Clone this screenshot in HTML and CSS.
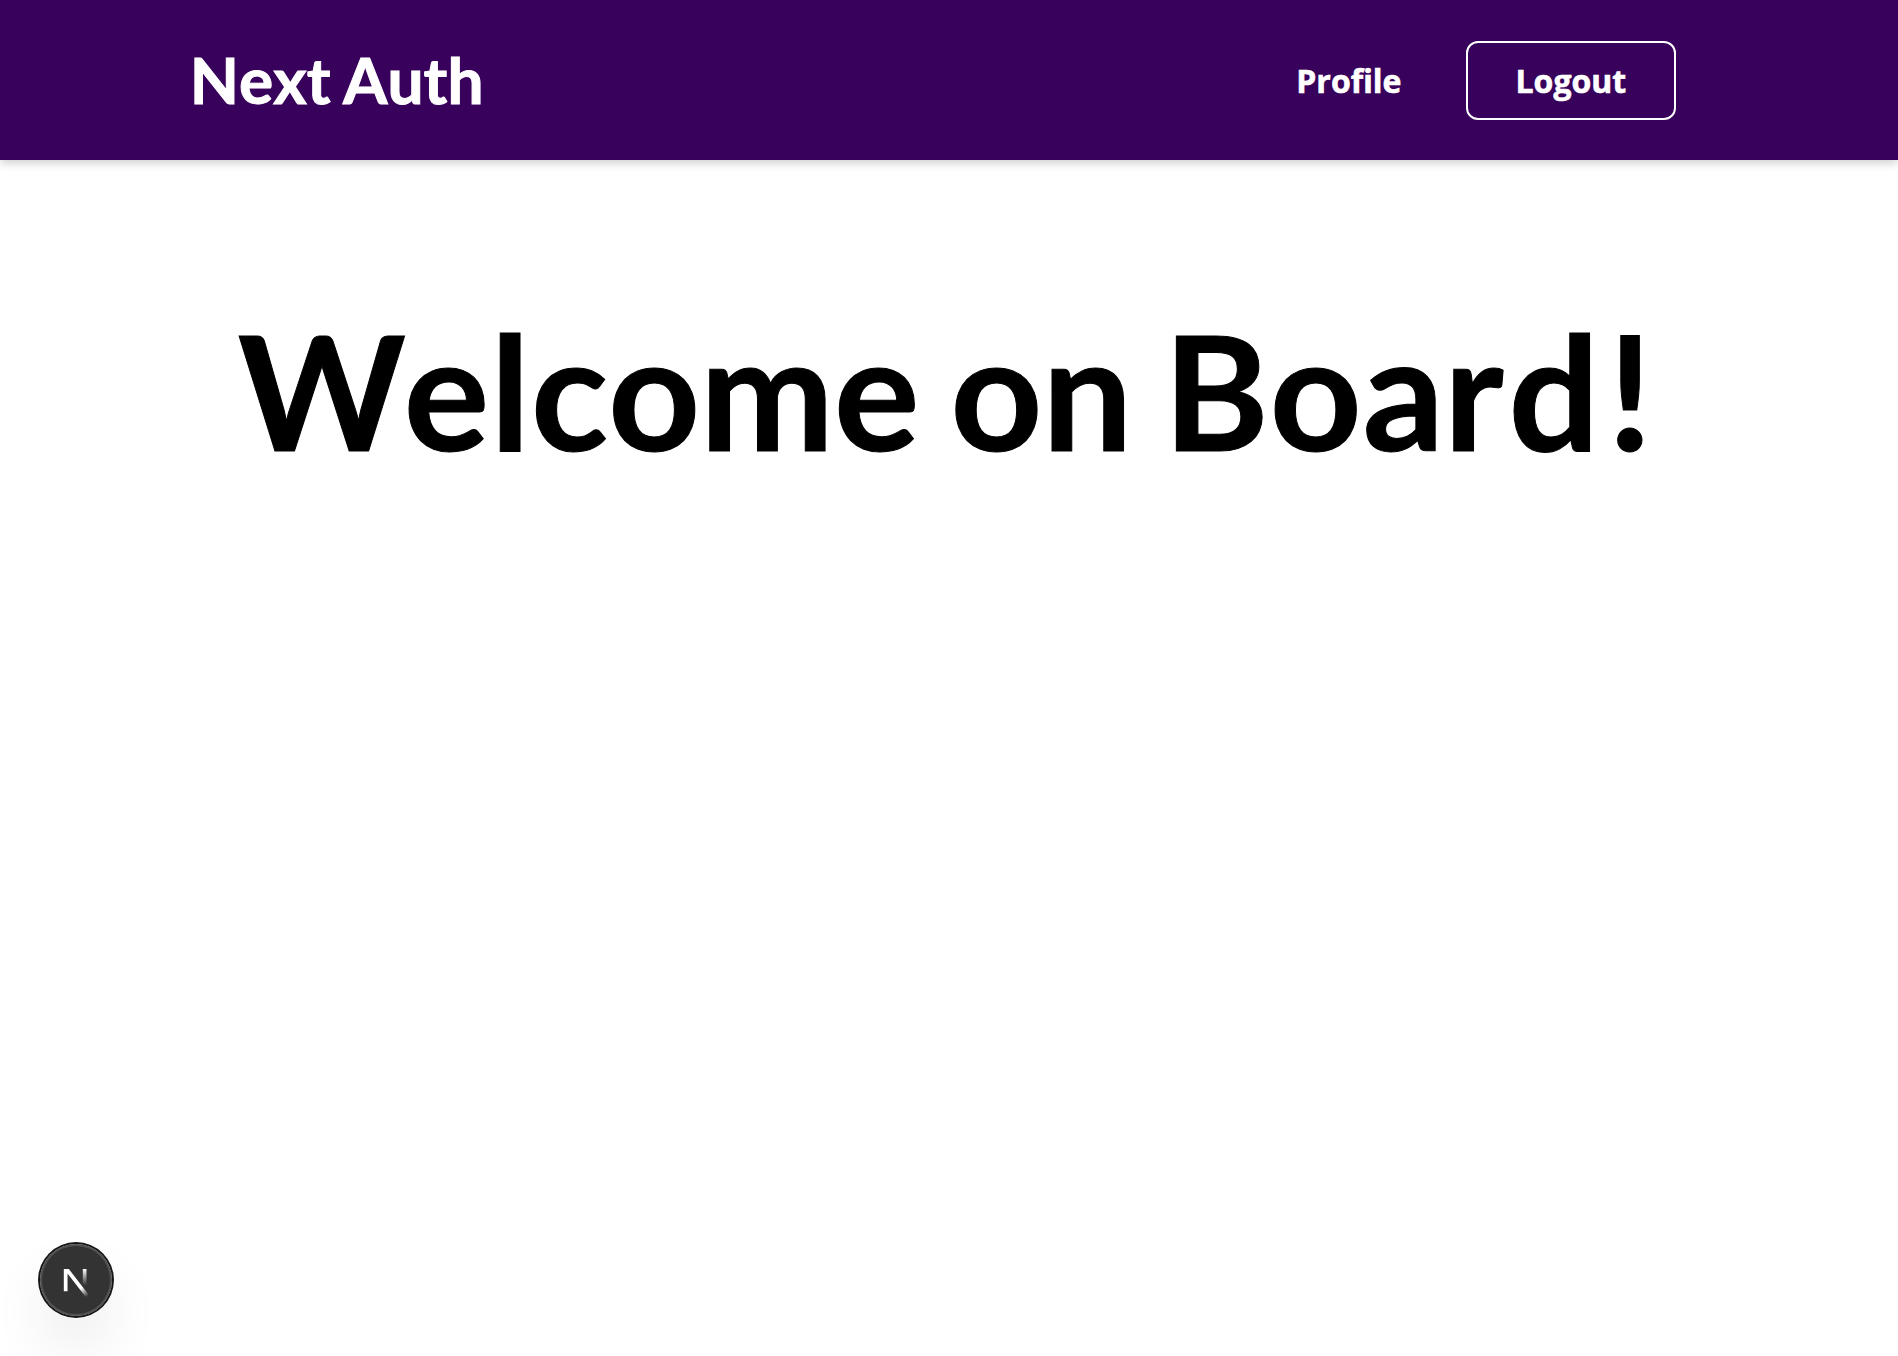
FILE: index.html
```html
<!DOCTYPE html>
<html lang="en">
<head>
<meta charset="utf-8">
<title>Next Auth</title>
<link rel="stylesheet" href="styles.css">
</head>
<body>
<header class="header">
  <a class="logo">Next Auth</a>
  <nav class="nav">
    <a class="nav-link">Profile</a>
    <button class="logout">Logout</button>
  </nav>
</header>
<main class="main">
  <h1 class="title"><span class="tight">W</span><span class="loose">el</span>come on <span class="loose">Bo</span>a<span class="wide">r</span><span class="wider">d!</span></h1>
</main>
<div class="badge">
  <svg width="72" height="72" viewBox="0 0 36 36" fill="none">
    <defs>
      <linearGradient id="diagonal" x1="9.95555" y1="11.1226" x2="15.4778" y2="17.9671" gradientUnits="userSpaceOnUse">
        <stop stop-color="white"/>
        <stop offset="0.604072" stop-color="white" stop-opacity="0"/>
        <stop offset="1" stop-color="white" stop-opacity="0"/>
      </linearGradient>
      <linearGradient id="stem" x1="11.8222" y1="1.40039" x2="11.791" y2="9.62542" gradientUnits="userSpaceOnUse">
        <stop stop-color="white"/>
        <stop offset="1" stop-color="white" stop-opacity="0"/>
      </linearGradient>
      <mask id="cut">
        <rect width="20" height="20" fill="white"/>
        <rect width="5" height="1.5" fill="black"/>
      </mask>
    </defs>
    <g transform="translate(10.5 11)">
      <path d="M13.3 15.2 L2.34 1 V12.6" stroke="url(#diagonal)" stroke-width="1.86" mask="url(#cut)"/>
      <path d="M11.825 1.5 V13.1" stroke="url(#stem)" stroke-width="1.86"/>
    </g>
  </svg>
</div>
</body>
</html>
```
FILE: styles.css
```css
body {
  margin: 0;
  background: #fff;
  font-family: "Open Sans", sans-serif;
}

.header {
  display: flex;
  align-items: center;
  justify-content: space-between;
  box-sizing: border-box;
  height: 160px;
  padding: 0 10%;
  background: #38015c;
  box-shadow: 0 2px 10px rgba(0, 0, 0, 0.23);
}

.logo {
  padding-bottom: 2px;
  font: bold 64px "Lato", sans-serif;
  color: #fff;
  font-kerning: none;
  word-spacing: -3px;
  -webkit-text-stroke: 1px #fff;
}

.nav {
  display: flex;
  align-items: center;
  gap: 64px;
  padding-right: 32px;
}

.nav-link,
.logout {
  font: bold 32px "Open Sans", sans-serif;
  color: #fff;
  -webkit-text-stroke: 0.6px #fff;
}

.logout {
  padding: 16px 48px;
  border: 2px solid #fff;
  border-radius: 12px;
  background: transparent;
}

.main {
  padding-top: 133px;
  text-align: center;
}

.title {
  margin: 0;
  font: bold 160px "Lato", sans-serif;
  font-kerning: none;
  word-spacing: -8px;
  -webkit-text-stroke: 1px #000;
  color: #000;
}

.tight {
  letter-spacing: -2px;
}

.loose {
  letter-spacing: 1px;
}

.wide {
  letter-spacing: 5px;
}

.wider {
  letter-spacing: 8px;
}

.badge {
  position: fixed;
  left: 40px;
  bottom: 40px;
  width: 72px;
  height: 72px;
  border-radius: 50%;
  background: rgba(0, 0, 0, 0.8);
  box-shadow: 0 0 0 2px #171717, inset 0 0 0 2px hsla(0, 0%, 100%, 0.14), 0 32px 64px -16px rgba(0, 0, 0, 0.24);
}

.badge svg {
  display: block;
}
```
